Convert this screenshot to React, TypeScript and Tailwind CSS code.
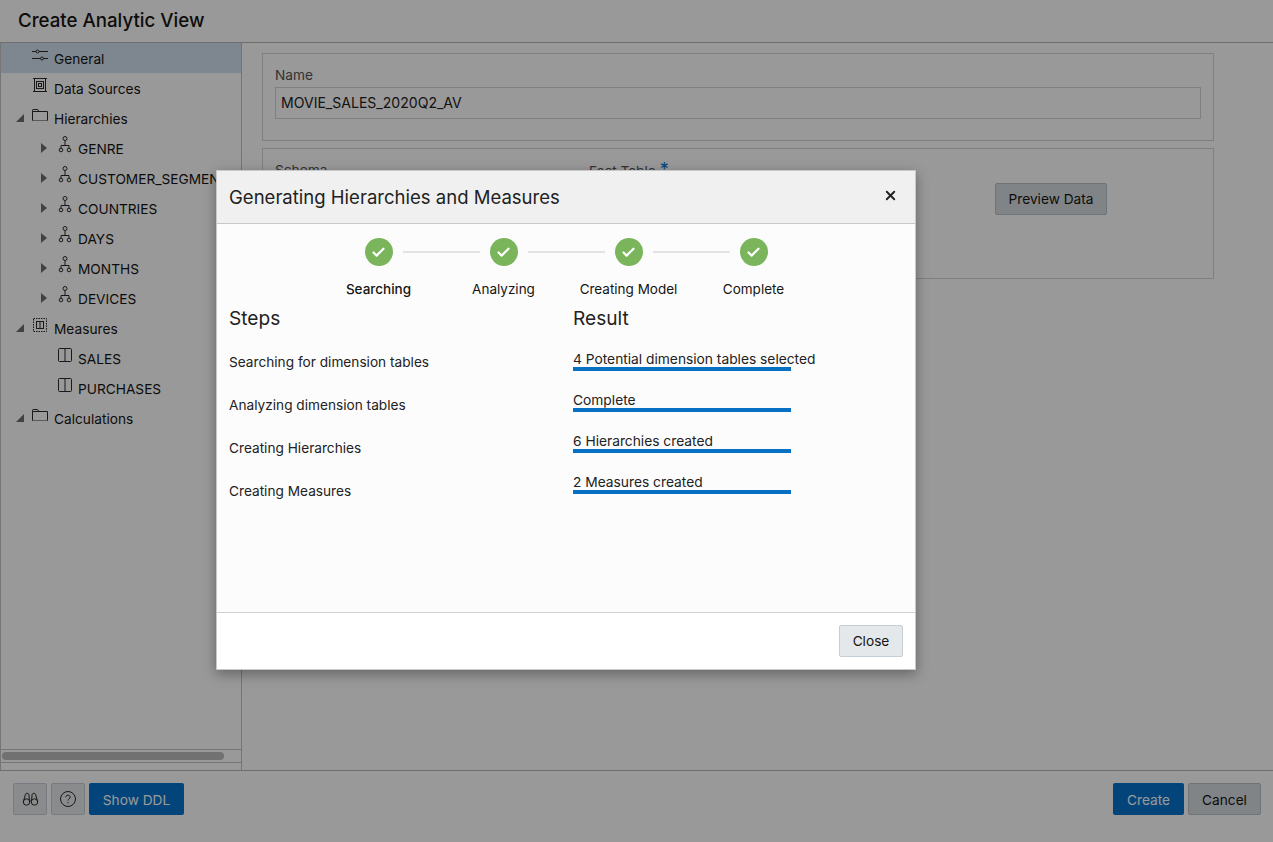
import { Check, X } from "lucide-react";

const SlidersIcon = () => (
  <svg width="16" height="14" viewBox="0 0 16 14" fill="none" stroke="#2b2b2b" strokeWidth="1">
    <path d="M0 3.5h4M7 3.5h9M0 10.5h8.5M11.5 10.5h4.5" />
    <circle cx="5.5" cy="3.5" r="1.5" />
    <circle cx="10" cy="10.5" r="1.5" />
  </svg>
);

const SourceIcon = () => (
  <svg width="14" height="14" viewBox="0 0 14 14" fill="none" stroke="#2b2b2b" strokeWidth="1">
    <path d="M0 .5h14M0 13.5h14M1.5 0v14M12.5 0v14" />
    <rect x="3.5" y="3.5" width="7" height="7" />
    <rect x="5.5" y="5.5" width="3" height="3" />
  </svg>
);

const FolderIcon = () => (
  <svg width="16" height="12" viewBox="0 0 16 12" fill="none" stroke="#2b2b2b" strokeWidth="1">
    <path d="M.5 2.5V1.2C.5.8.8.5 1.2.5h4.3l1.5 2h8.5v8.8c0 .4-.3.7-.7.7H1.2c-.4 0-.7-.3-.7-.7V2.5h6.5" />
  </svg>
);

const HierarchyIcon = () => (
  <svg width="14" height="17" viewBox="0 0 14 17" fill="none" stroke="#2b2b2b" strokeWidth="1">
    <circle cx="7" cy="2.5" r="2" />
    <path d="M7 4.5v5M3 12.2V9.5h8v2.7" />
    <circle cx="3" cy="14" r="1.8" />
    <circle cx="11" cy="14" r="1.8" />
  </svg>
);

const MeasureGroupIcon = () => (
  <svg width="14" height="14" viewBox="0 0 14 14" fill="none" stroke="#2b2b2b" strokeWidth="1">
    <rect x=".5" y=".5" width="13" height="13" strokeDasharray="1.5 1" />
    <rect x="3.5" y="3.5" width="7" height="7" />
    <path d="M7 3.5v7" />
  </svg>
);

const MeasureIcon = () => (
  <svg width="14" height="14" viewBox="0 0 14 14" fill="none" stroke="#2b2b2b" strokeWidth="1">
    <rect x=".5" y=".5" width="13" height="13" rx="1" />
    <path d="M7 .5v13" />
  </svg>
);

const BinocularsIcon = () => (
  <svg width="17" height="16" viewBox="0 0 16 16" fill="none" stroke="#2b2b2b" strokeWidth="1">
    <circle cx="4" cy="11" r="3.2" />
    <circle cx="12" cy="11" r="3.2" />
    <path d="M.8 11 3 3.2C3.2 2 6 2 6.3 3.2L7 9.5M15.2 11 13 3.2C12.8 2 10 2 9.7 3.2L9 9.5M7 10h2" />
  </svg>
);

const HelpIcon = () => (
  <svg width="16" height="16" viewBox="0 0 16 16" fill="none" stroke="#2b2b2b" strokeWidth="1">
    <circle cx="8" cy="8" r="7.5" />
    <path d="M5.8 6.2C5.8 5 6.8 4.2 8 4.2s2.2.8 2.2 2c0 1.6-2.2 1.6-2.2 3.3" />
    <path d="M8 11v1.2" />
  </svg>
);

const Expanded = () => <span className="w-0 h-0 border-l-[8px] border-l-transparent border-b-[8px] border-b-[#6f6f6f]" />;
const Collapsed = () => <span className="w-0 h-0 border-y-[5px] border-y-transparent border-l-[6px] border-l-[#6f6f6f]" />;

const tree = [
  { label: "General", icon: SlidersIcon, level: 0, selected: true },
  { label: "Data Sources", icon: SourceIcon, level: 0 },
  { label: "Hierarchies", icon: FolderIcon, level: 0, open: true },
  { label: "GENRE", icon: HierarchyIcon, level: 1, closed: true },
  { label: "CUSTOMER_SEGMENT", icon: HierarchyIcon, level: 1, closed: true },
  { label: "COUNTRIES", icon: HierarchyIcon, level: 1, closed: true },
  { label: "DAYS", icon: HierarchyIcon, level: 1, closed: true },
  { label: "MONTHS", icon: HierarchyIcon, level: 1, closed: true },
  { label: "DEVICES", icon: HierarchyIcon, level: 1, closed: true },
  { label: "Measures", icon: MeasureGroupIcon, level: 0, open: true },
  { label: "SALES", icon: MeasureIcon, level: 1 },
  { label: "PURCHASES", icon: MeasureIcon, level: 1 },
  { label: "Calculations", icon: FolderIcon, level: 0, open: true },
];

const steps = ["Searching", "Analyzing", "Creating Model", "Complete"];
const stepNames = ["Searching for dimension tables", "Analyzing dimension tables", "Creating Hierarchies", "Creating Measures"];
const results = ["4 Potential dimension tables selected", "Complete", "6 Hierarchies created", "2 Measures created"];

export default function App() {
  return (
    <div className="relative flex flex-col w-[1273px] h-[842px] overflow-hidden bg-white text-[#161513] text-[13.7px] font-['Inter','Liberation_Sans',sans-serif]">
      {/* Title */}
      <div className="h-[43px] shrink-0 flex items-center px-[18px] pt-[1px] border-b border-[#b8b8b8]">
        <h1 className="text-[18.7px] font-medium">Create Analytic View</h1>
      </div>

      <div className="flex flex-1 min-h-0">
        {/* Tree */}
        <aside className="w-[242px] shrink-0 flex flex-col border-x border-[#c4c4c4] overflow-hidden">
          <div className="flex-1">
            {tree.map((item) => (
              <div key={item.label} className={`flex items-center h-[30px] pt-[2px] whitespace-nowrap ${item.selected ? "bg-[#d3e2ef]" : ""}`}>
                <span className={`flex justify-center shrink-0 -mt-[2px] ${item.level === 1 ? "w-[47px] pl-[40px] pr-[1px]" : "w-[31px] pl-[15px] pr-[8px]"}`}>
                  {item.open && <Expanded />}
                  {item.closed && <Collapsed />}
                </span>
                <span className={`flex justify-center items-center shrink-0 -mt-[9px] ${item.level === 1 ? "w-[14px] mr-[5px] translate-x-[10px]" : "w-[16px] mr-[6px]"}`}>
                  <item.icon />
                </span>
                <span className={item.level === 1 ? "ml-[11px]" : ""}>{item.label}</span>
              </div>
            ))}
          </div>
          <div className="h-[14px] mb-[7px] flex items-center px-[1px] border-y border-[#c4c4c4]">
            <div className="w-[222px] h-[8px] rounded-full bg-[#bcbcbc]" />
          </div>
        </aside>

        {/* Form */}
        <main className="flex-1 pl-[20px] pr-[59px] pt-[10px] flex flex-col gap-[7px]">
          <section className="h-[88px] border border-[#d6d6d6] px-[12px] pt-[12px]">
            <div className="text-[#555] leading-[18px]">Name</div>
            <div className="mt-[3px] h-[32px] pb-[1px] border border-[#d6d6d6] flex items-center px-[5px] text-[14.05px] text-[#222]">MOVIE_SALES_2020Q2_AV</div>
          </section>
          <section className="h-[131px] border border-[#d6d6d6] px-[12px] pt-[12px] flex">
            <div className="w-[314px] text-[#555] leading-[18px]">Schema</div>
            <div className="w-[406px] text-[#555] leading-[18px]">
              Fact Table <span className="text-[18px] leading-none text-[#0572ce]">*</span>
            </div>
            <button className="mt-[22px] h-[32px] w-[112px] rounded-[2px] border border-[#b8c0c6] bg-[#d8dde1] text-[#161513]">Preview Data</button>
          </section>
        </main>
      </div>

      {/* Footer */}
      <footer className="h-[72px] shrink-0 border-t border-[#b8b8b8] flex items-start pt-[12px] pl-[13px] pr-[12px]">
        <button className="w-[34px] h-[32px] flex items-center justify-center rounded-[2px] border border-[#c4ced7] bg-[#e4e8ea]"><BinocularsIcon /></button>
        <button className="ml-[4px] w-[34px] h-[32px] flex items-center justify-center rounded-[2px] border border-[#c4ced7] bg-[#e4e8ea]"><HelpIcon /></button>
        <button className="ml-[4px] w-[95px] h-[32px] pt-[2px] rounded-[2px] bg-[#0572ce] text-white">Show DDL</button>
        <button className="ml-auto w-[71px] h-[32px] pt-[2px] rounded-[2px] bg-[#0572ce] text-white">Create</button>
        <button className="ml-[4px] w-[73px] h-[32px] pt-[2px] rounded-[2px] border border-[#b8c0c6] bg-[#d8dde1]">Cancel</button>
      </footer>

      <div className="absolute inset-0 bg-black/40" />

      {/* Dialog */}
      <div className="absolute left-[216px] top-[170px] w-[700px] h-[500px] flex flex-col bg-[#fcfcfc] border border-[#c8c8c8] shadow-[0_4px_12px_rgba(0,0,0,0.35)]">
        <div className="h-[53px] shrink-0 flex items-center justify-between pl-[12px] pr-[17.5px] pt-[2px] bg-[#f0f0f0] border-b border-[#c8c8c8]">
          <h2 className="text-[18.55px] text-[#222]">Generating Hierarchies and Measures</h2>
          <X size={15} strokeWidth={3} className="text-[#222] -mt-[5px]" />
        </div>

        <div className="flex-1 min-h-0 px-[12px] pt-[14px]">
          <div className="flex justify-center">
            {steps.map((step, i) => (
              <div key={step} className="relative w-[125px] flex flex-col items-center">
                <span className="w-[28px] h-[28px] rounded-full bg-[#7ab55c] flex items-center justify-center">
                  <Check size={15} strokeWidth={3.5} className="text-white" />
                </span>
                {i < steps.length - 1 && <span className="absolute left-[87px] top-[13px] w-[77px] h-[2px] bg-[#e3e3e3]" />}
                <span className={`mt-[14px] text-[13.5px] leading-[18px] whitespace-nowrap ${i === 0 ? "font-medium" : ""}`}>{step}</span>
              </div>
            ))}
          </div>

          <div className="flex mt-[8px]">
            <div className="w-[344px]">
              <h3 className="text-[19.1px] leading-[24px] text-[#222]">Steps</h3>
              <div className="mt-[23px] flex flex-col gap-[25px]">
                {stepNames.map((name) => (
                  <div key={name} className="text-[13.66px] leading-[18px] text-[#222]">{name}</div>
                ))}
              </div>
            </div>
            <div>
              <h3 className="text-[19.1px] leading-[24px] text-[#222]">Result</h3>
              <div className="mt-[20px] flex flex-col gap-[20px]">
                {results.map((text) => (
                  <div key={text} className="w-[218px]">
                    <div className="h-[17px] text-[13.77px] leading-[19px] whitespace-nowrap text-[#222]">{text}</div>
                    <div className="h-[4px] bg-[#0670c2]" />
                  </div>
                ))}
              </div>
            </div>
          </div>
        </div>

        <div className="h-[57px] shrink-0 border-t border-[#d0d0d0] flex items-start justify-end pt-[12px] pr-[12px] bg-white">
          <button className="w-[64px] h-[32px] rounded-[2px] border border-[#c4ced7] bg-[#e4e8ea] text-[#161513]">Close</button>
        </div>
      </div>
    </div>
  );
}
